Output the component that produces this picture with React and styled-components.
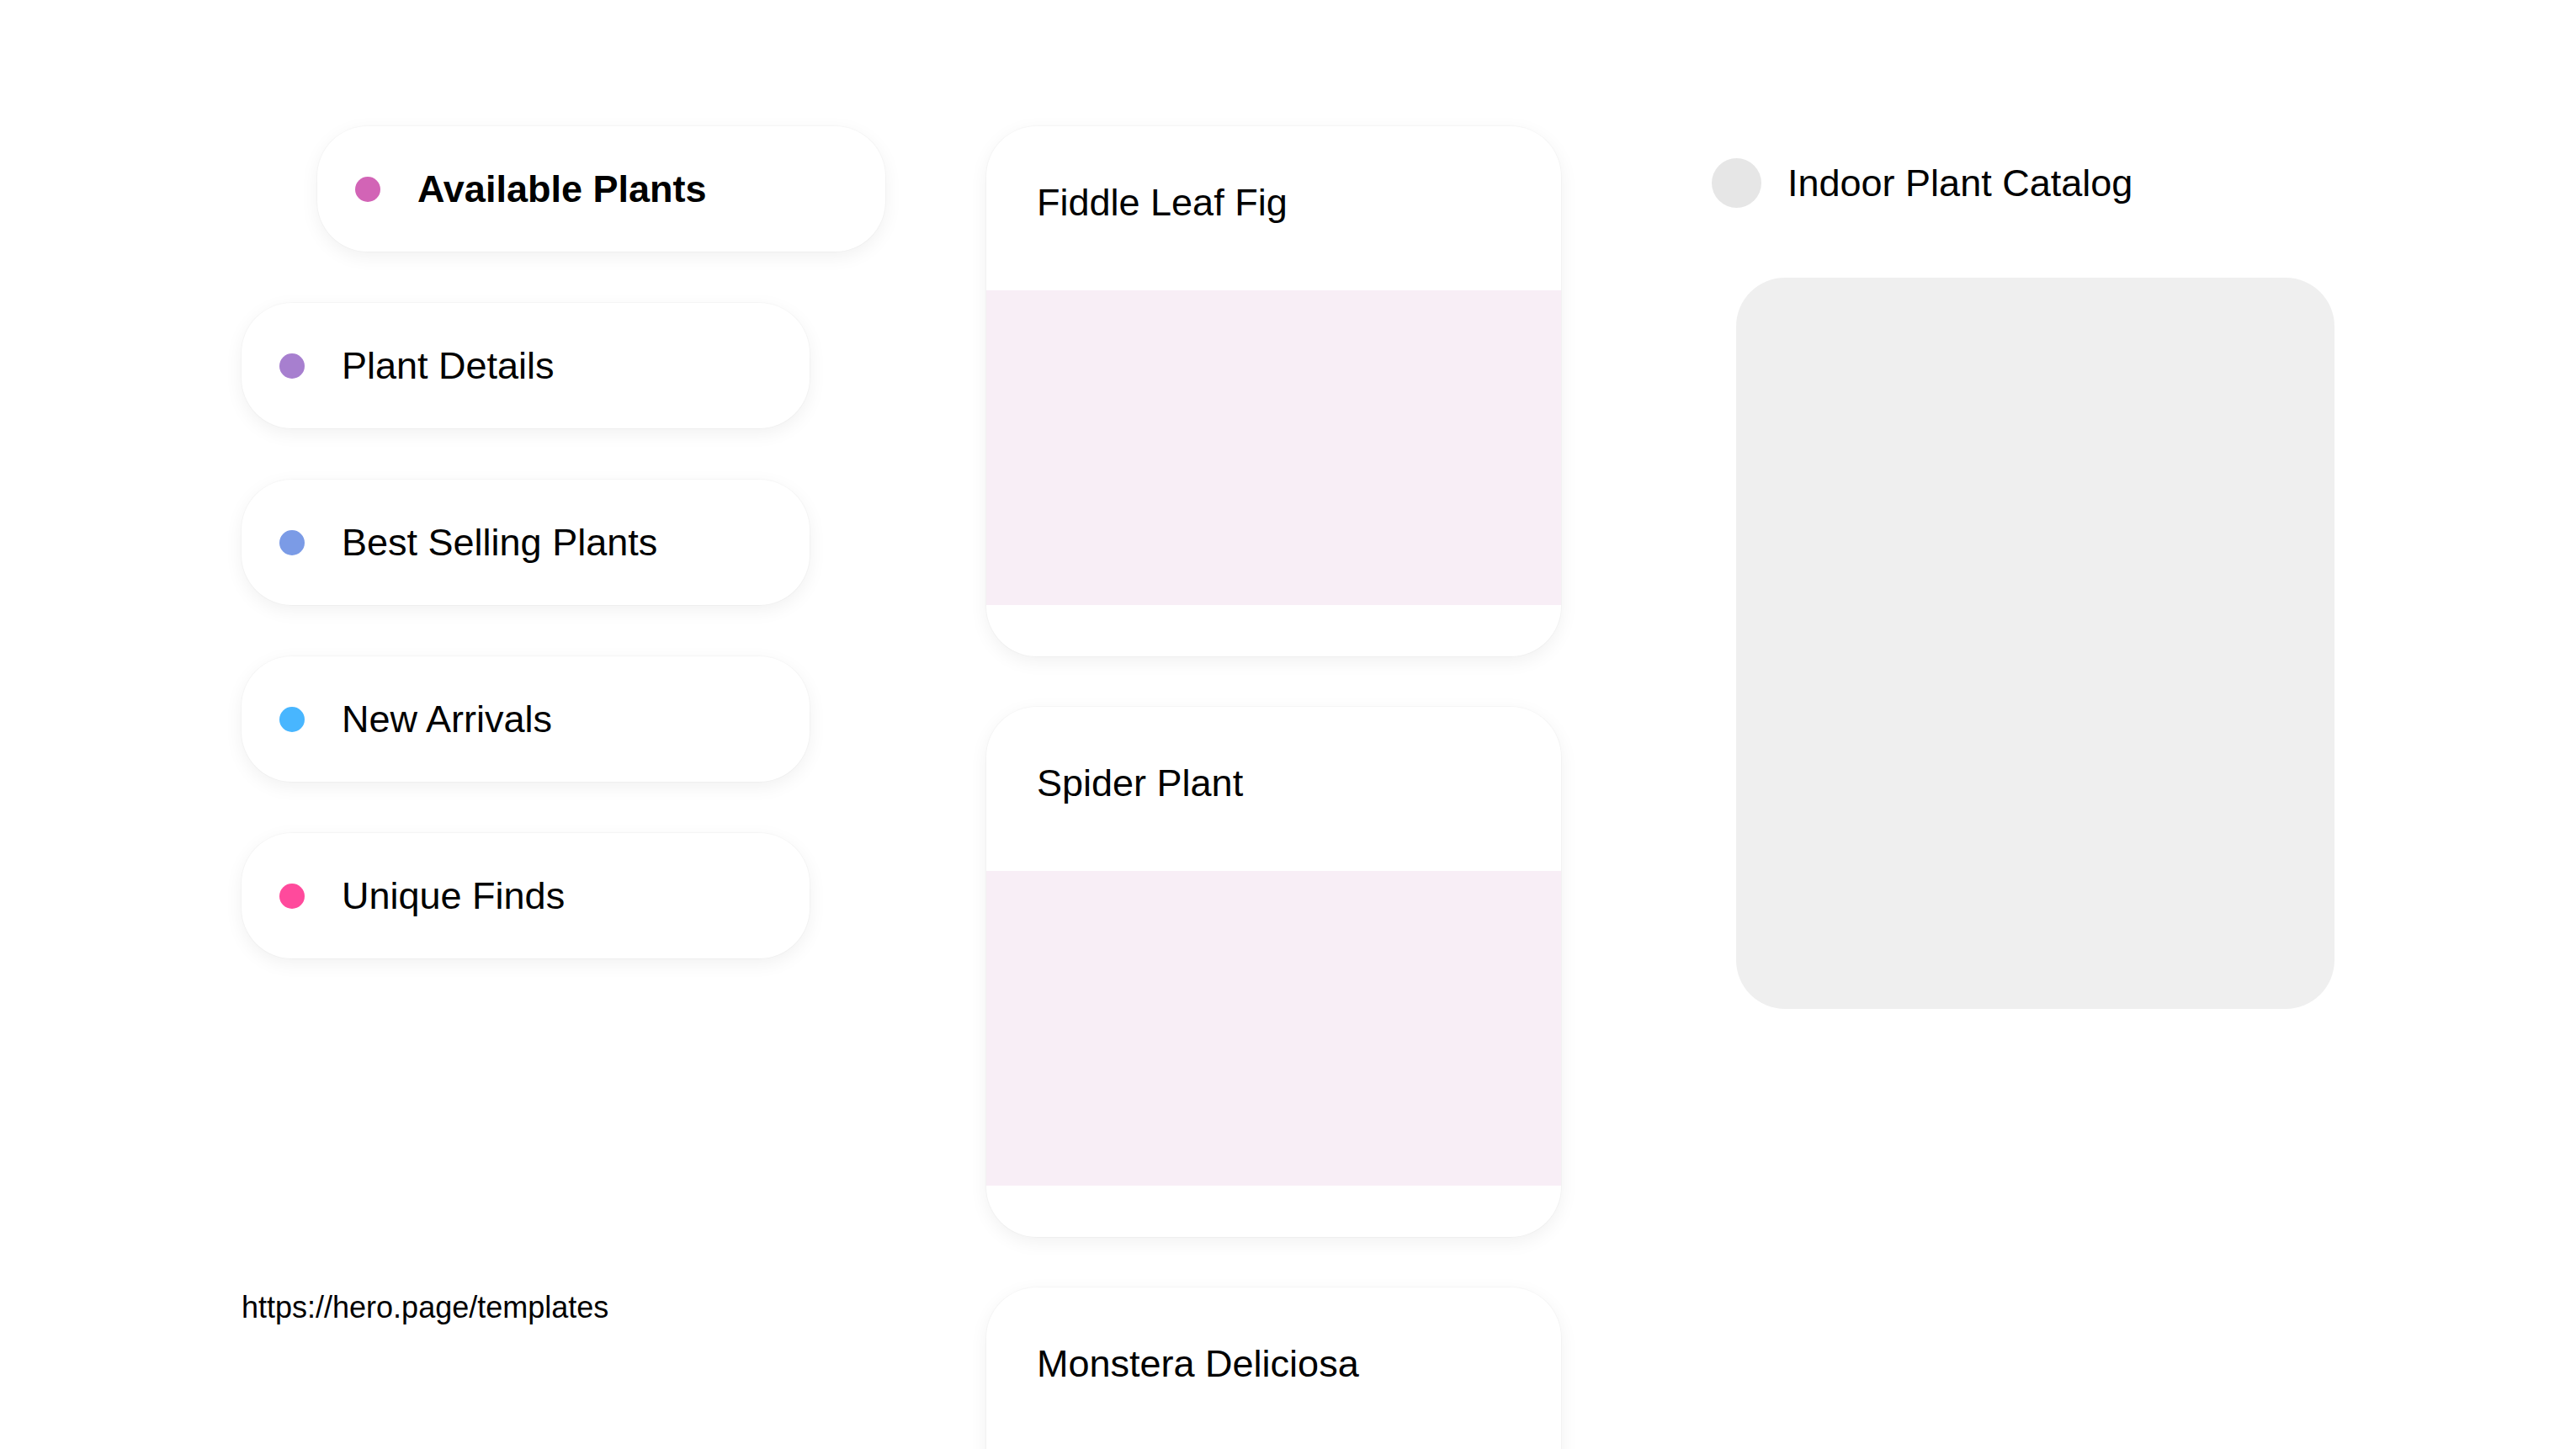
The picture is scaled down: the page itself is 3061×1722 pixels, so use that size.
import React from "react";
import styled, { createGlobalStyle } from "styled-components";

const GlobalStyle = createGlobalStyle`
  body {
    margin: 0;
    background: #ffffff;
    font-family: "Liberation Sans", Arial, sans-serif;
    color: #000000;
  }
`;

const Page = styled.div`
  display: flex;
  align-items: flex-start;
  padding: 150px 0 0 287px;
  height: 1722px;
  box-sizing: border-box;
  overflow: hidden;
`;

const Sidebar = styled.div`
  width: 885px;
  display: flex;
  flex-direction: column;
  flex-shrink: 0;
`;

const NavList = styled.div`
  display: flex;
  flex-direction: column;
  gap: 61px;
`;

const NavPill = styled.div`
  width: 675px;
  height: 149px;
  box-sizing: border-box;
  margin-left: ${(p) => (p.active ? "90px" : "0")};
  display: flex;
  align-items: center;
  gap: 44px;
  padding-left: 45px;
  background: #ffffff;
  border-radius: 60px;
  box-shadow: 0 0 0 1px rgba(0, 0, 0, 0.025), 0 6px 22px rgba(0, 0, 0, 0.06);
`;

const Dot = styled.span`
  width: 30px;
  height: 30px;
  border-radius: 50%;
  background: ${(p) => p.color};
  flex-shrink: 0;
`;

const NavLabel = styled.span`
  font-size: 45px;
  font-weight: ${(p) => (p.active ? 700 : 400)};
`;

const Url = styled.div`
  margin-top: 394px;
  font-size: 36px;
`;

const CardColumn = styled.div`
  width: 683px;
  display: flex;
  flex-direction: column;
  gap: 60px;
  flex-shrink: 0;
`;

const Card = styled.div`
  height: 630px;
  display: flex;
  flex-direction: column;
  flex-shrink: 0;
  background: #ffffff;
  border-radius: 60px;
  overflow: hidden;
  box-shadow: 0 0 0 1px rgba(0, 0, 0, 0.025), 0 6px 22px rgba(0, 0, 0, 0.06);
`;

const CardHeader = styled.div`
  height: 195px;
  box-sizing: border-box;
  padding: 65px 60px 0;
  font-size: 45px;
  line-height: 52px;
`;

const CardImage = styled.div`
  height: 374px;
  background: #f8eef6;
`;

const Catalog = styled.div`
  margin-left: 179px;
  margin-top: 38px;
  display: flex;
  flex-direction: column;
`;

const CatalogHeader = styled.div`
  display: flex;
  align-items: center;
  gap: 31px;
`;

const Avatar = styled.span`
  width: 59px;
  height: 59px;
  border-radius: 50%;
  background: #e6e6e6;
`;

const CatalogTitle = styled.span`
  font-size: 45px;
`;

const Preview = styled.div`
  margin: 83px 0 0 29px;
  width: 711px;
  height: 869px;
  background: #efefef;
  border-radius: 58px;
`;

const navItems = [
  { label: "Available Plants", color: "#d264b6", active: true },
  { label: "Plant Details", color: "#a77fcf" },
  { label: "Best Selling Plants", color: "#7b9be6" },
  { label: "New Arrivals", color: "#48b6ff" },
  { label: "Unique Finds", color: "#ff4a9c" },
];

const plants = ["Fiddle Leaf Fig", "Spider Plant", "Monstera Deliciosa"];

export default function App() {
  return (
    <>
      <GlobalStyle />
      <Page>
        <Sidebar>
          <NavList>
            {navItems.map((item) => (
              <NavPill key={item.label} active={item.active}>
                <Dot color={item.color} />
                <NavLabel active={item.active}>{item.label}</NavLabel>
              </NavPill>
            ))}
          </NavList>
          <Url>https://hero.page/templates</Url>
        </Sidebar>
        <CardColumn>
          {plants.map((name) => (
            <Card key={name}>
              <CardHeader>{name}</CardHeader>
              <CardImage />
            </Card>
          ))}
        </CardColumn>
        <Catalog>
          <CatalogHeader>
            <Avatar />
            <CatalogTitle>Indoor Plant Catalog</CatalogTitle>
          </CatalogHeader>
          <Preview />
        </Catalog>
      </Page>
    </>
  );
}
